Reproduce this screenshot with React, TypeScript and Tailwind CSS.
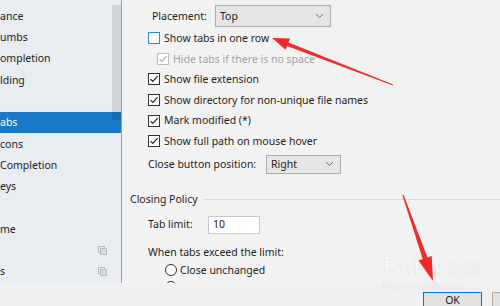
import React from 'react';

const FONT = { fontFamily: '"Noto Sans", "Open Sans", Arial, sans-serif' };

// left tree, already scrolled so the indent is cut off at the panel edge
const TREE: { text: string; selected?: boolean; icon?: boolean }[] = [
  { text: 'ance' },
  { text: 'umbs' },
  { text: 'ompletion' },
  { text: 'lding' },
  { text: '' },
  { text: 'abs', selected: true },
  { text: 'cons' },
  { text: 'Completion' },
  { text: 'eys' },
  { text: '' },
  { text: 'me' },
  { text: '', icon: true },
  { text: 's', icon: true },
];

const CopyIcon = () => (
  <svg width="9" height="9" viewBox="0 0 9 9" className="shrink-0">
    <rect x="0.5" y="0.5" width="6" height="6" fill="#e9ecf1" stroke="#b9bdc3" />
    <rect x="2.5" y="2.5" width="6" height="6" fill="#d7dade" stroke="#b9bdc3" />
  </svg>
);

const Chevron = () => (
  <svg width="9" height="6" viewBox="0 0 9 6">
    <path d="M1 1l3.5 3.5L8 1" fill="none" stroke="#6b6b6b" strokeWidth="1" />
  </svg>
);

const Check = ({ checked, disabled, focused }: { checked?: boolean; disabled?: boolean; focused?: boolean }) => {
  const border = focused ? 'border-[#2f86dc]' : disabled ? 'border-[#bdbdbd]' : 'border-[#333333]';
  return (
    <span className={`flex h-[12px] w-[12px] shrink-0 items-center justify-center border bg-white ${border}`}>
      {checked && (
        <svg width="10" height="10" viewBox="0 0 10 10">
          <path d="M1.5 5.2l2.3 2.3L8.6 2.2" fill="none" stroke={disabled ? '#b0b0b0' : '#222'} strokeWidth="1.2" />
        </svg>
      )}
    </span>
  );
};

const CheckRow = ({ label, checked, disabled, focused, indent }: { label: string; checked?: boolean; disabled?: boolean; focused?: boolean; indent?: boolean }) => (
  <div className={`flex h-[20.6px] items-center gap-[4px] whitespace-nowrap ${indent ? 'pl-[35px]' : 'pl-[26px]'}`}>
    <Check checked={checked} disabled={disabled} focused={focused} />
    <span className={disabled ? 'text-[#a3a3a3]' : 'text-[#1e1e1e]'}>{label}</span>
  </div>
);

const Select = ({ value, width }: { value: string; width: string }) => (
  <div className={`flex h-full items-center justify-between border border-[#adadad] bg-[#e5e5e5] pl-[4px] pr-[6px] ${width}`}>
    <span className="text-[#1e1e1e]">{value}</span>
    <Chevron />
  </div>
);

const Radio = ({ label }: { label?: string }) => (
  <div className="flex h-[17px] items-center gap-[3px] whitespace-nowrap pl-[43px] text-[#1e1e1e]">
    <span className="h-[12px] w-[12px] shrink-0 rounded-full border border-[#333] bg-white" />
    {label && <span>{label}</span>}
  </div>
);

export default function App() {
  return (
    <div className="relative h-[306px] w-[500px] overflow-hidden bg-[#f0f0f0] text-[10.5px] leading-none" style={FONT}>
      <div className="flex h-[283px]">
        {/* settings tree */}
        <div className="relative w-[122px] shrink-0 border-r border-[#9e9e9e] bg-[#e9ecf1] pt-[5.5px]">
          {TREE.map((row, i) => (
            <div
              key={i}
              className={`flex h-[21.3px] items-center justify-between pr-[14px] ${row.selected ? 'bg-[#1a78c8] text-white' : 'text-[#222]'}`}
            >
              <span>{row.text}</span>
              {row.icon && <CopyIcon />}
            </div>
          ))}
          <div className="absolute right-0 top-[5px] h-[115px] w-[9px] bg-black/10" />
        </div>

        {/* editor tabs page */}
        <div className="flex-1 overflow-hidden bg-[#f2f2f2] pt-[5px]">
          <div className="flex h-[22px] items-center pl-[30px]">
            <span className="w-[63px] text-[#1e1e1e]">Placement:</span>
            <Select value="Top" width="w-[116px]" />
          </div>
          <div className="mt-[1px]">
            <CheckRow label="Show tabs in one row" focused />
            <CheckRow label="Hide tabs if there is no space" checked disabled indent />
            <CheckRow label="Show file extension" checked />
            <CheckRow label="Show directory for non-unique file names" checked />
            <CheckRow label="Mark modified (*)" checked />
            <CheckRow label="Show full path on mouse hover" checked />
          </div>
          <div className="mt-[3px] flex h-[19px] items-center whitespace-nowrap pl-[26px]">
            <span className="w-[118px] text-[#1e1e1e]">Close button position:</span>
            <Select value="Right" width="w-[75px]" />
          </div>

          <div className="mt-[16px] flex h-[20px] items-center gap-[6px] pl-[8px]">
            <span className="text-[#1e1e1e]">Closing Policy</span>
            <div className="h-px flex-1 bg-[#d9d9d9]" />
          </div>
          <div className="mt-[6px] flex h-[18px] items-center pl-[26px]">
            <span className="w-[60px] text-[#1e1e1e]">Tab limit:</span>
            <div className="flex h-full w-[52px] items-center border border-[#c9c9c9] bg-white pl-[4px] text-[#1e1e1e]">10</div>
          </div>
          <div className="mt-[10px] flex h-[18px] items-center pl-[26px] text-[#1e1e1e]">When tabs exceed the limit:</div>
          <Radio label="Close unchanged" />
          {/* next option, cut off by the panel edge */}
          <Radio />
        </div>
      </div>

      {/* dialog buttons */}
      <div className="flex justify-end gap-[10px] pt-[9px]">
        <div className="flex h-[23px] w-[59px] items-start justify-center border border-[#0078d7] bg-[#e1e1e1] pt-[2px] text-[#1e1e1e]">OK</div>
        <div className="h-[23px] w-[8px] border-y border-l border-[#adadad] bg-[#e1e1e1]" />
      </div>

      {/* watermark */}
      <div className="pointer-events-none absolute left-[383px] top-[254px] flex flex-col items-start text-white/80" style={{ fontFamily: '"Liberation Sans", "Noto Sans CJK SC", sans-serif', textShadow: '0 0 1px #c8c8c8' }}>
        <div className="flex items-end gap-[2px]">
          <span className="text-[24px] font-bold leading-none">Bai</span>
          <span className="text-[18px] leading-none">du</span>
          <span className="ml-[4px] text-[16px] leading-none">经验</span>
        </div>
        <span className="mt-[3px] text-[10px] leading-none">jingyan.baidu.com</span>
      </div>

      {/* annotation arrows */}
      <svg className="pointer-events-none absolute inset-0" width="500" height="306" viewBox="0 0 500 306">
        <polygon
          points="272,38 290,38.6 288.5,42.4 393.2,84.5 392.8,85.5 287.1,46.1 285.6,49.8"
          fill="#f12b2b"
        />
        <polygon
          points="433,281 418.5,260.6 422.7,259.1 402.4,195.2 403.6,194.8 427.5,257.5 431.7,256"
          fill="#f12b2b"
        />
      </svg>
    </div>
  );
}
